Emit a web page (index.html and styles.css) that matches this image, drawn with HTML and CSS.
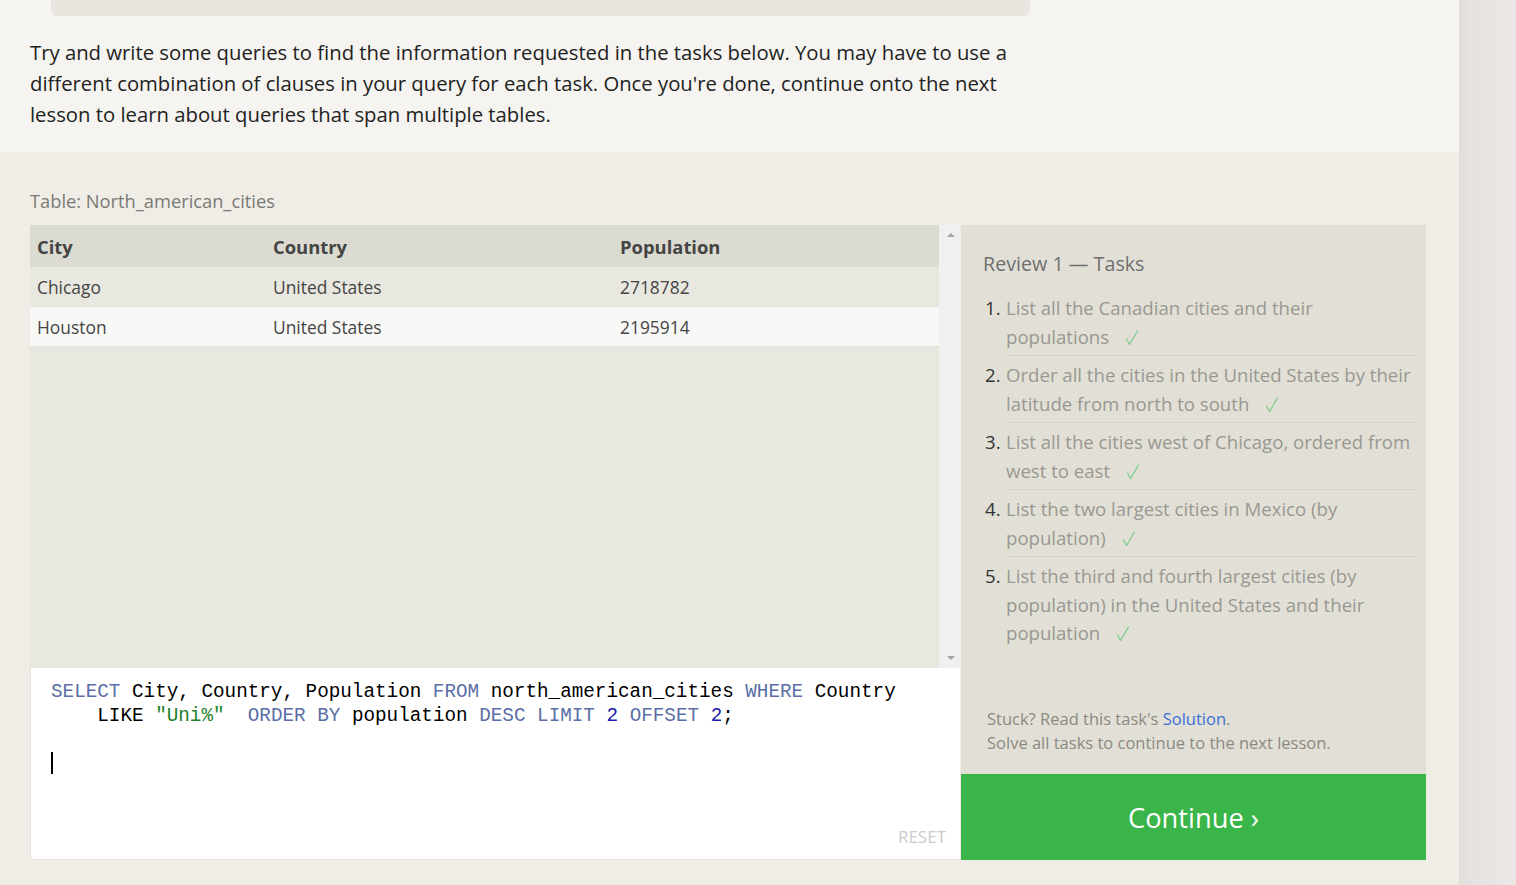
FILE: index.html
```html
<!DOCTYPE html>
<html lang="en">
<head>
<meta charset="utf-8">
<title>SQL Review 1</title>
<link rel="stylesheet" href="styles.css">
</head>
<body>
<div class="page">
  <div class="main">
    <section class="intro">
      <div class="topbox"></div>
      <p class="lead">Try and write some queries to find the information requested in the tasks below. You may have to use a different combination of clauses in your query for each task. Once you're done, continue onto the next lesson to learn about queries that span multiple tables.</p>
    </section>
    <section class="exercise">
      <div class="table-label">Table: North_american_cities</div>
      <div class="workspace">
        <div class="left">
          <div class="results">
            <div class="table-wrap">
              <div class="row head">
                <div class="c c1">City</div>
                <div class="c c2">Country</div>
                <div class="c c3">Population</div>
              </div>
              <div class="row">
                <div class="c c1">Chicago</div>
                <div class="c c2">United States</div>
                <div class="c c3">2718782</div>
              </div>
              <div class="row alt">
                <div class="c c1">Houston</div>
                <div class="c c2">United States</div>
                <div class="c c3">2195914</div>
              </div>
            </div>
            <div class="scrollbar">
              <span class="arrow up"></span>
              <span class="arrow down"></span>
            </div>
          </div>
          <div class="editor">
            <div class="code">
              <div class="line"><span class="kw">SELECT</span><span> City, Country, Population </span><span class="kw">FROM</span><span> north_american_cities </span><span class="kw">WHERE</span><span> Country</span></div>
              <div class="line wrap"><span>LIKE </span><span class="str">"Uni%"</span><span>  </span><span class="kw">ORDER BY</span><span> population </span><span class="kw">DESC</span><span> </span><span class="kw">LIMIT</span><span> </span><span class="num">2</span><span> </span><span class="kw">OFFSET</span><span> </span><span class="num">2</span><span>;</span></div>
              <div class="line"></div>
              <div class="line"><span class="cursor"></span></div>
            </div>
            <div class="reset">RESET</div>
          </div>
        </div>
        <aside class="tasks">
          <div class="tasks-body">
            <h2 class="tasks-title">Review 1 — Tasks</h2>
            <ol class="task-list">
              <li><span class="n">1.</span><span class="t">List all the Canadian cities and their populations<svg class="check" viewBox="0 0 14 16" width="14" height="16"><path d="M1.5 9 L4.5 14.5 L12.5 1"/></svg></span></li>
              <li><span class="n">2.</span><span class="t">Order all the cities in the United States by their latitude from north to south<svg class="check" viewBox="0 0 14 16" width="14" height="16"><path d="M1.5 9 L4.5 14.5 L12.5 1"/></svg></span></li>
              <li><span class="n">3.</span><span class="t">List all the cities west of Chicago, ordered from west to east<svg class="check" viewBox="0 0 14 16" width="14" height="16"><path d="M1.5 9 L4.5 14.5 L12.5 1"/></svg></span></li>
              <li><span class="n">4.</span><span class="t">List the two largest cities in Mexico (by population)<svg class="check" viewBox="0 0 14 16" width="14" height="16"><path d="M1.5 9 L4.5 14.5 L12.5 1"/></svg></span></li>
              <li><span class="n">5.</span><span class="t">List the third and fourth largest cities (by population) in the United States and their population<svg class="check" viewBox="0 0 14 16" width="14" height="16"><path d="M1.5 9 L4.5 14.5 L12.5 1"/></svg></span></li>
            </ol>
            <div class="stuck">
              <div><span>Stuck? Read this task's </span><a class="solution" href="#">Solution</a><span>.</span></div>
              <div>Solve all tasks to continue to the next lesson.</div>
            </div>
          </div>
          <a class="continue" href="#">Continue ›</a>
        </aside>
      </div>
    </section>
  </div>
  <div class="side"></div>
</div>
</body>
</html>
```

FILE: styles.css
```css
* { box-sizing: border-box; }
html, body { margin: 0; padding: 0; }
body {
  font-family: "Open Sans", "Noto Sans", sans-serif;
  background: #efede6;
  color: #222;
}
.page {
  display: flex;
  width: 1516px;
  height: 885px;
  overflow: hidden;
}
.main {
  width: 1459px;
  display: flex;
  flex-direction: column;
}
.side {
  flex: 1;
  background: linear-gradient(to right, #e1dddb 0px, #e6e2df 10px, #ebe7e4 57px);
}
.intro {
  background: #f5f4f0;
  height: 152px;
  padding: 0 0 0 30px;
}
.topbox {
  margin-left: 21px;
  width: 979px;
  height: 16px;
  background: #e8e6df;
  border-radius: 0 0 6px 6px;
}
.lead {
  margin: 21px 0 0 0;
  width: 1000px;
  font-size: 20.3px;
  line-height: 31px;
  color: #222;
}
.exercise {
  flex: 1;
  padding: 37px 33px 25px 30px;
}
.table-label {
  font-size: 18.3px;
  line-height: 24px;
  color: #7a7a76;
  margin-bottom: 12px;
}
.workspace {
  display: flex;
  height: 635px;
}
.left {
  width: 930px;
  display: flex;
  flex-direction: column;
}
.results {
  height: 443px;
  display: flex;
  background: #e8e7e0;
}
.table-wrap {
  flex: 1;
}
.row {
  display: flex;
  height: 40px;
  align-items: center;
  font-size: 17.4px;
  color: #454545;
  border-bottom: 1px solid #e2e1da;
}
.row.head {
  height: 42px;
  background: #dcdbd1;
  font-weight: 700;
  font-size: 18.4px;
  color: #444;
  border-bottom: none;
}
.row.alt { background: #f8f8f7; }
.c { padding-left: 7px; }
.c1 { width: 236px; }
.c2 { width: 347px; }
.c3 { flex: 1; }
.scrollbar {
  width: 21px;
  background: #f0f0f0;
  display: flex;
  flex-direction: column;
  justify-content: space-between;
  align-items: center;
  padding: 8px 0 8px 2px;
}
.arrow {
  width: 0;
  height: 0;
  border-left: 4px solid transparent;
  border-right: 4px solid transparent;
}
.arrow.up { border-bottom: 4px solid #a3a3a3; }
.arrow.down { border-top: 4px solid #a3a3a3; }
.editor {
  flex: 1;
  background: #fff;
  border-left: 1px solid #e6e4dc;
  border-bottom: 1px solid #e3e1d9;
  display: flex;
  flex-direction: column;
  padding: 12px 14px 12px 20px;
}
.code {
  font-family: "Liberation Mono", "DejaVu Sans Mono", monospace;
  font-size: 19.3px;
  line-height: 24px;
  color: #000;
}
.line {
  height: 24px;
  white-space: pre;
}
.line.wrap { padding-left: 46.3px; }
.kw { color: #5a6ea5; }
.num { color: #1b1bab; }
.str { color: #22822a; }
.cursor {
  display: inline-block;
  width: 2px;
  height: 22px;
  background: #000;
  vertical-align: -4px;
}
.reset {
  margin-top: auto;
  align-self: flex-end;
  font-size: 17px;
  line-height: 20px;
  color: #cbcbcb;
}
.tasks {
  width: 465px;
  margin-left: 1px;
  display: flex;
  flex-direction: column;
}
.tasks-body {
  flex: 1;
  background: #e2e0d6;
  padding: 24px 10px 19px 22px;
  display: flex;
  flex-direction: column;
}
.tasks-title {
  margin: 0 0 15px 0;
  font-weight: 400;
  font-size: 19.7px;
  line-height: 30px;
  color: #6f6f6f;
}
.task-list {
  list-style: none;
  margin: 0;
  padding: 0 0 0 2px;
}
.task-list li {
  display: flex;
  font-size: 18.6px;
  line-height: 28.5px;
}
.n {
  width: 21px;
  flex: none;
  color: #333;
}
.t {
  flex: 1;
  color: #999892;
  padding: 5px 0 4px 0;
  border-bottom: 1px solid #d5d3c9;
}
.task-list li:first-child .t { padding-top: 0; }
.task-list li .n { padding-top: 5px; }
.task-list li:first-child .n { padding-top: 0; }
.task-list li:last-child .t { border-bottom: none; }
.check {
  margin-left: 16px;
  vertical-align: -2px;
  fill: none;
  stroke: #7fcb8d;
  stroke-width: 1.3;
  stroke-linecap: round;
  stroke-linejoin: round;
}
.stuck {
  margin-top: auto;
  padding-left: 4px;
  font-size: 16.5px;
  line-height: 24px;
  color: #8a8984;
}
.solution {
  color: #3c6fd6;
  text-decoration: none;
}
.continue {
  height: 86px;
  background: #3ab54a;
  color: #fff;
  display: flex;
  align-items: center;
  justify-content: center;
  font-size: 27.3px;
  text-decoration: none;
}
```
